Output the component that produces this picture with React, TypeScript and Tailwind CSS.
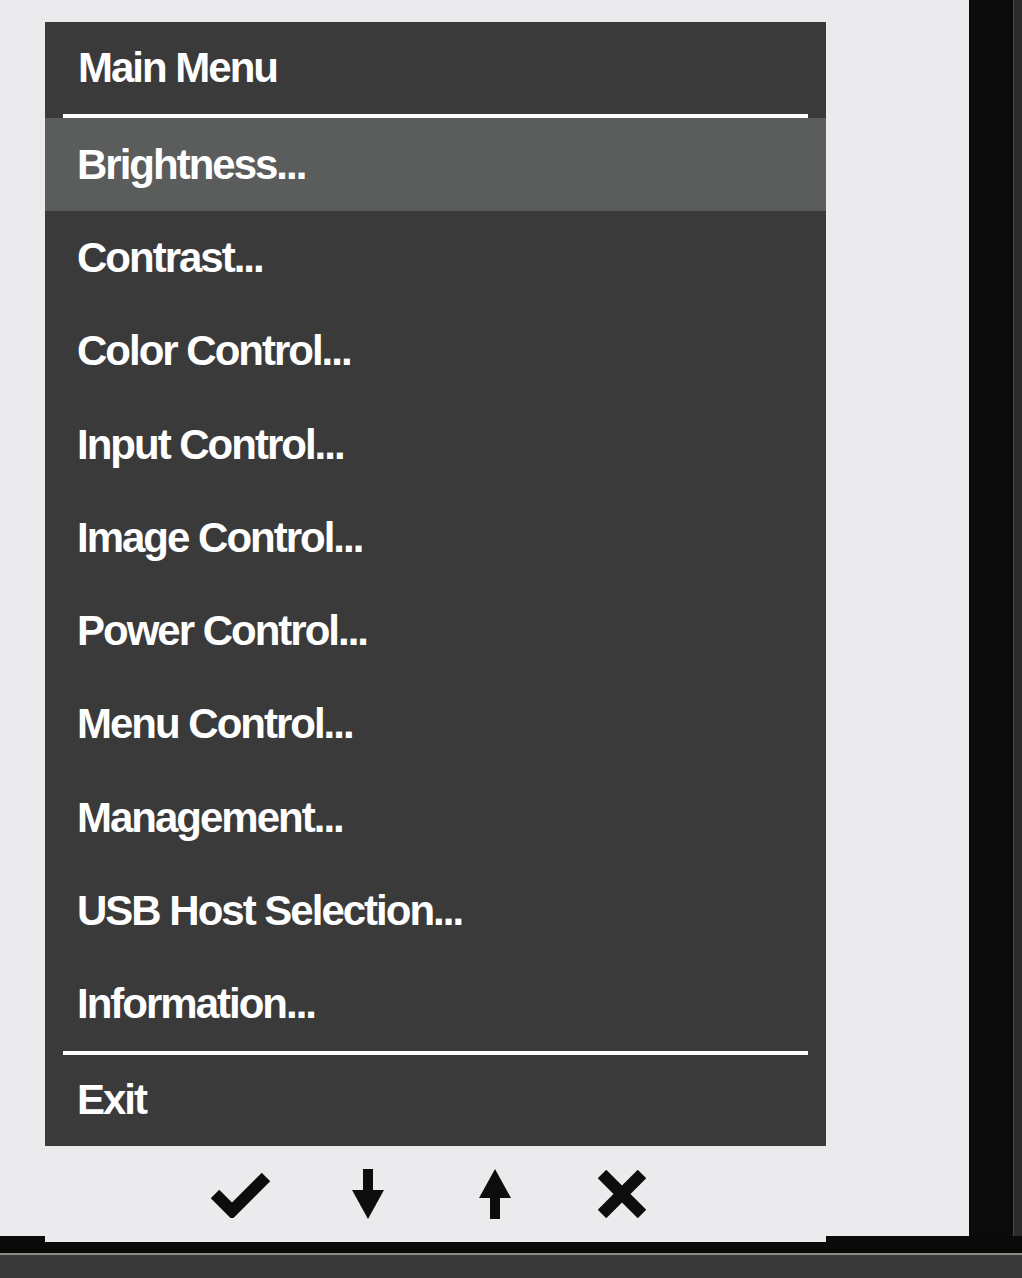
const items = [
  "Brightness...",
  "Contrast...",
  "Color Control...",
  "Input Control...",
  "Image Control...",
  "Power Control...",
  "Menu Control...",
  "Management...",
  "USB Host Selection...",
  "Information...",
];

const font = "font-['Liberation_Sans',Arial,sans-serif] font-bold text-[42px] tracking-[-2px] text-white leading-none";

function CheckIcon() {
  return (
    <svg width="60" height="48" viewBox="0 0 60 48">
      <polyline points="4,24 21,41 55,7" fill="none" stroke="#0d0d0d" strokeWidth="12" strokeLinejoin="miter" />
    </svg>
  );
}

function ArrowIcon({ up }: { up?: boolean }) {
  return (
    <svg width="32" height="50" viewBox="0 0 32 50" className={up ? "rotate-180" : ""}>
      <rect x="11" y="0" width="10" height="24" fill="#0d0d0d" />
      <polygon points="0,21 32,21 16,50" fill="#0d0d0d" />
    </svg>
  );
}

function CloseIcon() {
  return (
    <svg width="48" height="48" viewBox="0 0 48 48">
      <line x1="4" y1="4" x2="44" y2="44" stroke="#0d0d0d" strokeWidth="12" />
      <line x1="44" y1="4" x2="4" y2="44" stroke="#0d0d0d" strokeWidth="12" />
    </svg>
  );
}

export default function App() {
  return (
    <div className="w-[1022px] h-[1278px] flex flex-col bg-[#3a3a3a] overflow-hidden">
      <div className="flex h-[1236px] shrink-0">
        {/* screen */}
        <div className="w-[969px] h-[1236px] bg-[#ebebed] pt-[22px] pl-[45px]">
          <div className="w-[781px] flex flex-col">
            <div className="bg-[#3a3a3a] flex flex-col">
              <div className="h-[92px] flex items-center pl-[33px]">
                <span className={font}>Main Menu</span>
              </div>
              <div className="h-[4px] mx-[18px] bg-white" />
              {items.map((label, i) => (
                <div
                  key={label}
                  className={`h-[93.3px] flex items-center pl-[32px] ${i === 0 ? "bg-[#5b5c5c]" : ""}`}
                >
                  <span className={font}>{label}</span>
                </div>
              ))}
              <div className="h-[4px] mx-[18px] bg-white" />
              <div className="h-[91px] flex items-center pl-[32px]">
                <span className={font}>Exit</span>
              </div>
            </div>
            <div className="relative z-10 h-[96px] bg-[#ebebed] flex items-center justify-center pr-[8px]">
              <div className="w-[127px] flex justify-center"><CheckIcon /></div>
              <div className="w-[127px] flex justify-center"><ArrowIcon /></div>
              <div className="w-[127px] flex justify-center"><ArrowIcon up /></div>
              <div className="w-[127px] flex justify-center"><CloseIcon /></div>
            </div>
          </div>
        </div>
        {/* right bezel */}
        <div className="w-[44px] bg-[#0b0b0b]" />
        <div className="w-[1px] bg-[#4a4a48]" />
        <div className="flex-1 bg-[#2c2c2c]" />
      </div>
      <div className="h-[17px] shrink-0 bg-[#0a0a0a]" />
      <div className="h-[2px] shrink-0 bg-[#8d8b84]" />
      <div className="flex-1 bg-[#393939]" />
    </div>
  );
}
